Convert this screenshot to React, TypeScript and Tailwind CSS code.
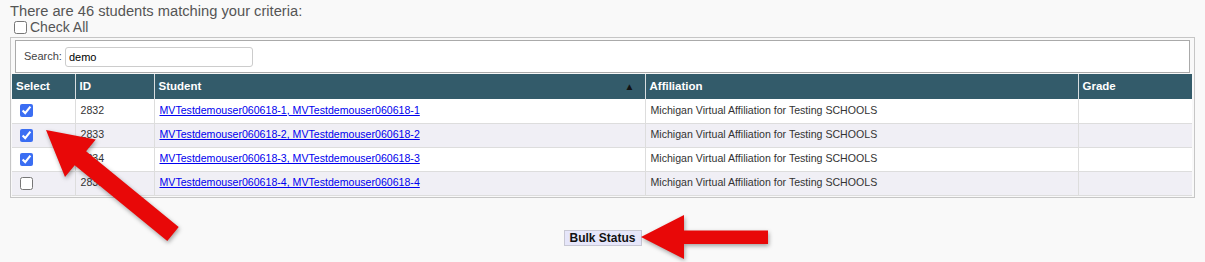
import { useState } from 'react';

interface Row {
  id: number;
  name: string;
  affiliation: string;
  checked: boolean;
}

const initialRows: Row[] = [
  { id: 2832, name: 'MVTestdemouser060618-1, MVTestdemouser060618-1', affiliation: 'Michigan Virtual Affiliation for Testing SCHOOLS', checked: true },
  { id: 2833, name: 'MVTestdemouser060618-2, MVTestdemouser060618-2', affiliation: 'Michigan Virtual Affiliation for Testing SCHOOLS', checked: true },
  { id: 2834, name: 'MVTestdemouser060618-3, MVTestdemouser060618-3', affiliation: 'Michigan Virtual Affiliation for Testing SCHOOLS', checked: true },
  { id: 2835, name: 'MVTestdemouser060618-4, MVTestdemouser060618-4', affiliation: 'Michigan Virtual Affiliation for Testing SCHOOLS', checked: false },
];

const App = () => {
  const [rows, setRows] = useState<Row[]>(initialRows);
  const [search, setSearch] = useState('demo');
  const allChecked = rows.every((r) => r.checked);

  const toggle = (id: number) =>
    setRows(rows.map((r) => (r.id === id ? { ...r, checked: !r.checked } : r)));

  return (
    <div className="relative w-[1205px] min-h-[262px] bg-[#f9f9f9] font-['Liberation_Sans',Arial,sans-serif] text-[#333]">
      {/* Header text */}
      <div className="pl-[10px] pt-[2px] h-[18px] text-[14.7px] leading-[18px] text-[#555]">
        There are 46 students matching your criteria:
      </div>
      <label className="flex items-center h-[19px] pl-[14px] text-[14px] text-[#555]">
        <input
          type="checkbox"
          checked={allChecked}
          onChange={() => setRows(rows.map((r) => ({ ...r, checked: !allChecked })))}
          className="m-0 w-[13px] h-[13px] accent-[#3b6ef3]"
        />
        <span className="ml-[3px]">Check All</span>
      </label>

      {/* Table box */}
      <div className="mx-[10px] w-[1185px] border border-[#c6c6c6] p-[1px]">
        <div className="mx-[3px] mt-[1px] h-[33px] border border-[#aaa] bg-white flex items-center pl-[8px] text-[11px] text-[#444]">
          <span>Search:</span>
          <input
            value={search}
            onChange={(e) => setSearch(e.target.value)}
            className="ml-[3px] w-[188px] h-[20px] border border-[#ccc] rounded-[3px] px-[3px] text-[11px] text-black outline-none bg-white"
          />
        </div>

        <table className="mt-[1px] w-[1180px] table-fixed border-collapse text-[10.6px]">
          <colgroup>
            <col className="w-[63px]" />
            <col className="w-[79px]" />
            <col className="w-[491px]" />
            <col className="w-[433px]" />
            <col className="w-[114px]" />
          </colgroup>
          <thead>
            <tr className="h-[25px] bg-[#335b6a] text-white text-left text-[11.5px] font-bold">
              <th className="px-[4px] border-r border-[#d8dde0]">Select</th>
              <th className="px-[4px] border-r border-[#d8dde0]">ID</th>
              <th className="px-[4px] border-r border-[#d8dde0]">
                <div className="flex items-center justify-between">
                  <span>Student</span>
                  <span className="mr-[6px] text-[10px] leading-[10px] text-[#111]">▲</span>
                </div>
              </th>
              <th className="px-[4px] border-r border-[#d8dde0]">Affiliation</th>
              <th className="px-[4px]">Grade</th>
            </tr>
          </thead>
          <tbody>
            {rows.map((r, i) => (
              <tr
                key={r.id}
                className={`h-[24px] border-b border-[#ddd] ${i % 2 === 1 ? 'bg-[#f0eff5]' : 'bg-white'}`}
              >
                <td className="pl-[8px] border-r border-[#ddd]">
                  <input
                    type="checkbox"
                    checked={r.checked}
                    onChange={() => toggle(r.id)}
                    className="block m-0 w-[13px] h-[13px] accent-[#3b6ef3]"
                  />
                </td>
                <td className="px-[5px] border-r border-[#ddd]">{r.id}</td>
                <td className="px-[5px] border-r border-[#ddd]">
                  <a href="#" className="text-[#0000ee] underline">{r.name}</a>
                </td>
                <td className="px-[5px] border-r border-[#ddd]">{r.affiliation}</td>
                <td className="px-[5px]"></td>
              </tr>
            ))}
          </tbody>
        </table>
      </div>

      <div className="flex justify-center mt-[32px]">
        <button className="h-[16px] w-[78px] border border-[#c8c8d4] bg-[#e6e6fa] text-[12px] leading-[14px] font-bold text-[#111]">
          Bulk Status
        </button>
      </div>

      {/* Annotation arrows */}
      <svg
        className="absolute inset-0 pointer-events-none drop-shadow-[1px_2px_2px_rgba(0,0,0,0.35)]"
        width="1205"
        height="262"
        viewBox="0 0 1205 262"
      >
        <polygon
          fill="#e80808"
          points="46,130 65,177 74.7,165.2 167.3,241 178.7,227 86.1,151.2 95.8,139.4"
        />
        <polygon
          fill="#e80808"
          points="641,237 684,215 684,230.5 768,230.5 768,244 684,244 684,259"
        />
      </svg>
    </div>
  );
};

export default App;
